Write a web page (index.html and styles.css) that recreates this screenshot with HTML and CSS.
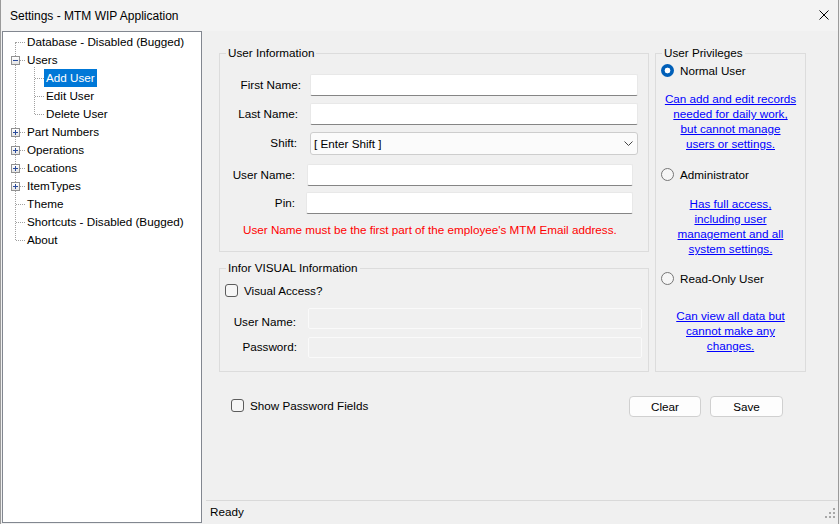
FILE: index.html
```html
<!DOCTYPE html>
<html>
<head>
<meta charset="utf-8">
<title>Settings - MTM WIP Application</title>
<link rel="stylesheet" href="styles.css">
</head>
<body>
<div class="window">
  <div class="titlebar">
    <span class="title">Settings - MTM WIP Application</span>
    <svg class="close" width="10" height="10" viewBox="0 0 10 10"><path d="M0.5 0.5 L9.5 9.5 M9.5 0.5 L0.5 9.5" stroke="#000" stroke-width="1" fill="none"/></svg>
  </div>
  <div class="body">
    <div class="tree">
      <ul class="tv">
        <li><div class="row"><span class="lbl">Database - Disabled (Bugged)</span></div></li>
        <li><div class="row"><span class="exp minus"></span><span class="lbl">Users</span></div>
          <ul class="tv-sub">
            <li><div class="row sub"><span class="lbl sel">Add User</span></div></li>
            <li><div class="row sub"><span class="lbl">Edit User</span></div></li>
            <li><div class="row sub"><span class="lbl">Delete User</span></div></li>
          </ul>
        </li>
        <li><div class="row"><span class="exp plus"></span><span class="lbl">Part Numbers</span></div></li>
        <li><div class="row"><span class="exp plus"></span><span class="lbl">Operations</span></div></li>
        <li><div class="row"><span class="exp plus"></span><span class="lbl">Locations</span></div></li>
        <li><div class="row"><span class="exp plus"></span><span class="lbl">ItemTypes</span></div></li>
        <li><div class="row"><span class="lbl">Theme</span></div></li>
        <li><div class="row"><span class="lbl">Shortcuts - Disabled (Bugged)</span></div></li>
        <li><div class="row"><span class="lbl">About</span></div></li>
      </ul>
    </div>
    <div class="main">
      <div class="content">
        <div class="groups">
          <div class="leftcol">
            <fieldset class="grp grp-user">
              <legend>User Information</legend>
              <div class="frow r-first"><span class="flbl">First Name:</span><span class="tb"></span></div>
              <div class="frow r-last"><span class="flbl">Last Name:</span><span class="tb"></span></div>
              <div class="frow r-shift"><span class="flbl">Shift:</span><span class="combo"><span>[ Enter Shift ]</span><svg width="9" height="5" viewBox="0 0 9 5"><path d="M0.5 0.5 L4.5 4.5 L8.5 0.5" stroke="#444" fill="none"/></svg></span></div>
              <div class="frow r-user"><span class="flbl">User Name:</span><span class="tb"></span></div>
              <div class="frow r-pin"><span class="flbl">Pin:</span><span class="tb"></span></div>
              <div class="hint">User Name must be the first part of the employee's MTM Email address.</div>
            </fieldset>
            <fieldset class="grp grp-visual">
              <legend>Infor VISUAL Information</legend>
              <div class="crow"><span class="check"></span><span>Visual Access?</span></div>
              <div class="frow v-user"><span class="flbl">User Name:</span><span class="tb disabled"></span></div>
              <div class="frow v-pass"><span class="flbl">Password:</span><span class="tb disabled"></span></div>
            </fieldset>
          </div>
          <fieldset class="grp grp-priv">
            <legend>User Privileges</legend>
            <div class="rrow p-normal"><span class="radio on"></span><span>Normal User</span></div>
            <a class="desc d-normal" href="#">Can add and edit records<br>needed for daily work,<br>but cannot manage<br>users or settings.</a>
            <div class="rrow p-admin"><span class="radio"></span><span>Administrator</span></div>
            <a class="desc d-admin" href="#">Has full access,<br>including user<br>management and all<br>system settings.</a>
            <div class="rrow p-read"><span class="radio"></span><span>Read-Only User</span></div>
            <a class="desc d-read" href="#">Can view all data but<br>cannot make any<br>changes.</a>
          </fieldset>
        </div>
        <div class="actions">
          <div class="crow show"><span class="check"></span><span>Show Password Fields</span></div>
          <div class="buttons">
            <span class="btn btn-clear">Clear</span>
            <span class="btn btn-save">Save</span>
          </div>
        </div>
      </div>
      <div class="statusbar">
        <span class="status">Ready</span>
        <svg class="grip" width="11" height="11" viewBox="0 0 11 11" fill="#a8a8a8"><rect x="8" y="0" width="2" height="2"/><rect x="4" y="4" width="2" height="2"/><rect x="8" y="4" width="2" height="2"/><rect x="0" y="8" width="2" height="2"/><rect x="4" y="8" width="2" height="2"/><rect x="8" y="8" width="2" height="2"/></svg>
      </div>
    </div>
  </div>
</div>
</body>
</html>
```

FILE: styles.css
```css
* { box-sizing: border-box; }
html, body { margin: 0; padding: 0; }
body {
  width: 840px;
  height: 524px;
  overflow: hidden;
  background: #f0f0f0;
  font-family: "Liberation Sans", Arial, sans-serif;
  font-size: 11.7px;
  color: #000;
}
.window {
  width: 839px;
  height: 524px;
  border-left: 1px solid #9a9a9a;
  border-right: 1px solid #9a9a9a;
  display: flex;
  flex-direction: column;
}
.titlebar {
  height: 31px;
  flex: none;
  display: flex;
  align-items: center;
  justify-content: space-between;
  padding: 0 9px 0 9px;
  background: #f3f3f3;
}
.title { font-size: 12px; }
.close { display: block; margin-top: -1px; }

.body { flex: 1; display: flex; min-height: 0; }

/* tree */
.tree {
  width: 200px;
  height: 492px;
  margin-left: 1px;
  background: #fff;
  border: 1px solid #828790;
  flex: none;
}
.tv, .tv-sub { list-style: none; margin: 0; padding: 0; position: relative; }
.tv { padding-top: 1px; }
.tv::before {
  content: "";
  position: absolute;
  left: 12px;
  top: 10px;
  bottom: 9px;
  border-left: 1px dotted #a0a0a0;
}
.tv-sub::before {
  content: "";
  position: absolute;
  left: 31px;
  top: -2px;
  bottom: 9px;
  border-left: 1px dotted #a0a0a0;
}
.row {
  height: 18px;
  display: flex;
  align-items: center;
  position: relative;
  padding-left: 22px;
}
.row::before {
  content: "";
  position: absolute;
  left: 13px;
  width: 9px;
  top: 9px;
  border-top: 1px dotted #a0a0a0;
}
.row.sub { padding-left: 41px; }
.row.sub::before { left: 32px; }
.lbl { padding: 0 2px; line-height: 18px; white-space: nowrap; }
.lbl.sel { background: #0078d7; color: #fff; }
.exp {
  position: absolute;
  left: 8px;
  top: 5px;
  width: 9px;
  height: 9px;
  border: 1px solid #919191;
  background: linear-gradient(#ffffff, #e4e4e4);
}
.exp::before {
  content: "";
  position: absolute;
  left: 1px;
  top: 3px;
  width: 5px;
  height: 1px;
  background: #2b4c9b;
}
.exp.plus::after {
  content: "";
  position: absolute;
  left: 3px;
  top: 1px;
  width: 1px;
  height: 5px;
  background: #2b4c9b;
}

/* main */
.main { flex: 1; display: flex; flex-direction: column; min-width: 0; }
.content { flex: 1; padding: 14px 0 0 17px; }
.groups { display: flex; gap: 6px; align-items: stretch; }
.leftcol { width: 430px; display: flex; flex-direction: column; gap: 8px; }

.grp {
  margin: 0;
  padding: 0;
  min-width: 0;
  border: 1px solid #dcdcdc;
}
.grp legend {
  margin-left: 6px;
  padding: 0 2px;
  line-height: 16px;
}
.grp-user { height: 207px; padding-top: 13px; }
.grp-visual { height: 112px; padding-top: 6px; }
.grp-priv { width: 151px; padding-top: 1px; }

.frow { display: flex; align-items: center; height: 22px; }
.flbl { text-align: right; white-space: nowrap; flex: none; padding-bottom: 2px; }
.tb {
  display: block;
  height: 22px;
  background: #fff;
  border: 1px solid #e8e8e8;
  border-bottom: 1px solid #858585;
  border-radius: 2px;
  flex: none;
}
.tb.disabled {
  height: 21px;
  background: #f0f0f0;
  border: 1px solid #fafafa;
}
.combo {
  display: flex;
  align-items: center;
  justify-content: space-between;
  height: 23px;
  width: 328px;
  margin-left: 13px;
  padding: 0 4px 0 3px;
  background: #fbfbfb;
  border: 1px solid #cdcdcd;
  border-radius: 3px;
}
.r-first .flbl { width: 81px; }
.r-first .tb { margin-left: 9px; width: 328px; }
.r-last { margin-top: 7px; }
.r-last .flbl { width: 78px; }
.r-last .tb { margin-left: 12px; width: 328px; }
.r-shift { margin-top: 7px; }
.r-shift .flbl { width: 77px; }
.r-user { margin-top: 10px; }
.r-user .flbl { width: 75px; }
.r-user .tb { margin-left: 12px; width: 326px; }
.r-pin { margin-top: 6px; }
.r-pin .flbl { width: 75px; }
.r-pin .tb { margin-left: 11px; width: 327px; }
.hint {
  margin: 8px 0 0 23px;
  color: #f00;
  line-height: 16px;
  white-space: nowrap;
}

.crow { display: flex; align-items: center; gap: 6px; height: 16px; margin-left: 5px; }
.check {
  width: 13px;
  height: 13px;
  border: 1px solid #5c5c5c;
  border-radius: 3px;
  background: #f6f6f6;
  flex: none;
}
.v-user { margin-top: 10px; height: 21px; }
.v-user .flbl { width: 76px; margin-top: 7px; }
.v-user .tb { margin-left: 12px; width: 334px; }
.v-pass { margin-top: 8px; height: 21px; }
.v-pass .flbl { width: 77px; }
.v-pass .tb { margin-left: 11px; width: 334px; }

.rrow { display: flex; align-items: center; gap: 6px; height: 16px; margin-left: 5px; }
.radio {
  width: 13px;
  height: 13px;
  border-radius: 50%;
  border: 1px solid #767676;
  background: #f6f6f6;
  flex: none;
}
.radio.on {
  border: none;
  background: radial-gradient(circle, #ffffff 0 2.6px, #005fb8 3.2px);
}
.desc {
  display: block;
  color: #0000ff;
  text-decoration: underline;
  text-align: center;
  line-height: 15px;
}
.d-normal { margin-top: 13px; }
.p-admin { margin-top: 15px; }
.d-admin { margin-top: 14px; }
.p-read { margin-top: 14px; }
.d-read { margin-top: 22px; }

.actions {
  width: 587px;
  margin-top: 24px;
  height: 21px;
  display: flex;
  align-items: center;
  justify-content: space-between;
  padding-right: 23px;
}
.actions .crow { margin-left: 12px; margin-bottom: 2px; }
.buttons { display: flex; gap: 9px; }
.btn {
  display: flex;
  align-items: center;
  justify-content: center;
  height: 21px;
  padding-bottom: 1px;
  background: #fdfdfd;
  border: 1px solid #d0d0d0;
  border-radius: 4px;
}
.btn-clear { width: 72px; }
.btn-save { width: 73px; }

.statusbar {
  height: 24px;
  flex: none;
  margin-left: 4px;
  border-top: 1px solid #d9d9d9;
  display: flex;
  align-items: center;
  justify-content: space-between;
  padding-left: 4px;
}
.status { margin-bottom: 2px; }
.grip { align-self: flex-end; margin: 0 2px 5px 0; display: block; }
```
